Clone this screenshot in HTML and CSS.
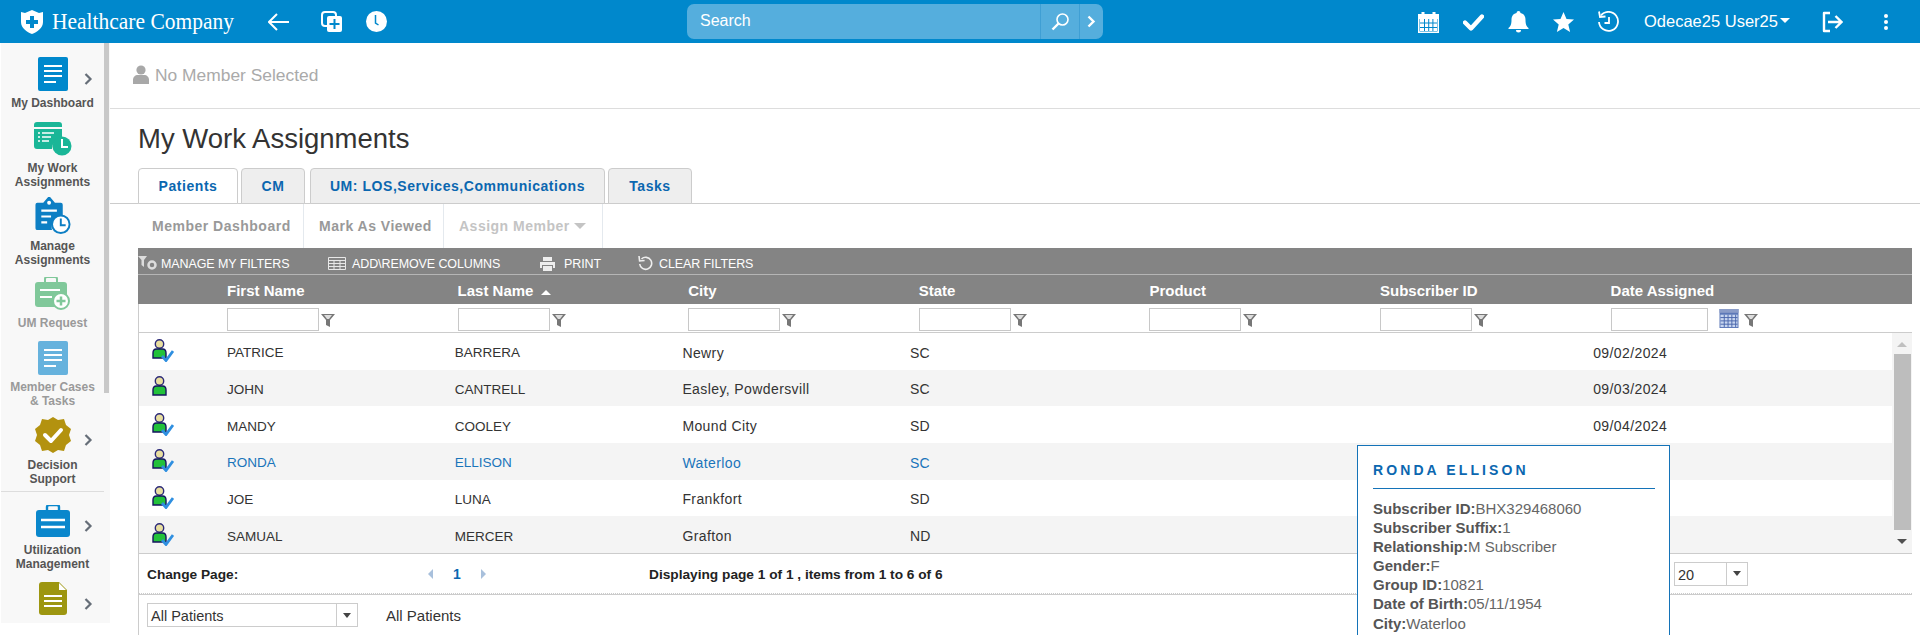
FILE: index.html
```html
<!DOCTYPE html>
<html lang="en">
<head>
    <meta charset="UTF-8">
    <title>My Work Assignments</title>
    <link rel="stylesheet" href="styles.css">
</head>
<body>
    <svg class="icon-defs" width="0" height="0">
        <symbol id="person" viewBox="0 0 15 20">
            <ellipse cx="7.5" cy="5" rx="4.200" ry="4.300" fill="#e9dfa0" stroke="#2c2a78" stroke-width="1.400"/>
            <path d="M1 19v-5c0-2.500 1.500-4 3.500-4h6c2 0 3.500 1.500 3.500 4v5z" fill="#22c13a" stroke="#14145e" stroke-width="1.400"/>
        </symbol>
        <symbol id="tick" viewBox="0 0 13 12">
            <path d="M1 6l4 4.500 7-9.500" fill="none" stroke="#2f8fe0" stroke-width="2.800"/>
        </symbol>
        <symbol id="funnel" viewBox="0 0 14 13">
            <path d="M0 0h14l-5 6v7l-4-2v-5z" fill="#777"/>
            <path d="M3 1h8l-3 4h-2z" fill="#ddd"/>
        </symbol>
        <symbol id="chev" viewBox="0 0 9 12">
            <path d="M1.500 1l5 5-5 5" fill="none" stroke="#666e78" stroke-width="2.200"/>
        </symbol>
    </svg>

    <header class="topbar">
        <div class="brand">
            <svg class="brand-shield" viewBox="0 0 22 24">
                <path d="M0 2l4 1 7-3 7 3 4-1v10c0 6-6 10-11 12C6 22 0 18 0 12z" fill="#fff"/>
                <path d="M9 6h4v4h4v4h-4v4H9v-4H5v-4h4z" fill="#0088cc"/>
            </svg>
            <span class="brand-name">Healthcare Company</span>
        </div>
        <div class="top-tools">
            <svg class="tool-back" viewBox="0 0 21 18"><path d="M9 1L1 9l8 8M1 9h20" fill="none" stroke="#fff" stroke-width="2"/></svg>
            <svg class="tool-dup" viewBox="0 0 21 21">
                <rect x="1" y="1" width="14" height="14" rx="3" fill="none" stroke="#fff" stroke-width="2"/>
                <rect x="6" y="5" width="15" height="16" rx="2" fill="#fff"/>
                <path d="M13.500 8v10M8.500 13h10" stroke="#0088cc" stroke-width="2"/>
            </svg>
            <svg class="tool-clock" viewBox="0 0 21 21">
                <circle cx="10.500" cy="10.500" r="10.500" fill="#fff"/>
                <path d="M9.500 4v8l3 2" fill="none" stroke="#0088cc" stroke-width="1.500"/>
            </svg>
        </div>
        <div class="search">
            <span class="search-text">Search</span>
            <span class="search-btn">
                <svg viewBox="0 0 19 19" width="19" height="19"><circle cx="11.500" cy="7.500" r="5.500" fill="none" stroke="#fff" stroke-width="1.600"/><path d="M7.500 11.500L1.500 17.500" stroke="#fff" stroke-width="2.400"/></svg>
            </span>
            <span class="search-more">
                <svg viewBox="0 0 9 13" width="9" height="13"><path d="M1.500 1.500l5 5-5 5" fill="none" stroke="#fff" stroke-width="2.400"/></svg>
            </span>
        </div>
        <div class="top-right">
            <svg class="top-icon" viewBox="0 0 21 22">
                <path d="M0 3h21v19H0z" fill="#fff"/>
                <path d="M5 1v4M16 1v4" stroke="#fff" stroke-width="3"/>
                <path d="M1.500 8h18v12.500h-18z" fill="#0088cc"/>
                <path d="M2 8h4v3.500H2zM7 8h3.200v3.500H7zM11.200 8h3.200v3.500h-3.200zM15.400 8H19v3.500h-3.600zM2 12.500h4V16H2zM7 12.500h3.200V16H7zM11.200 12.500h3.200V16h-3.200zM15.400 12.500H19V16h-3.600zM2 17h4v3H2zM7 17h3.200v3H7zM11.200 17h3.200v3h-3.200zM15.400 17H19v3h-3.600z" fill="#fff"/>
            </svg>
            <svg class="top-icon" viewBox="0 0 21 22"><path d="M2 11.500l6 6L19 5.500" fill="none" stroke="#fff" stroke-width="4.400" stroke-linecap="round" stroke-linejoin="round"/></svg>
            <svg class="top-icon" viewBox="0 0 21 22"><path d="M10.500 0a2 2 0 0 1 2 2c4 1 5 4 5 7 0 5 1.500 7 3 8v1H.5v-1c1.500-1 3-3 3-8 0-3 1-6 5-7a2 2 0 0 1 2-2zM8 19h5a2.500 2.500 0 0 1-5 0z" fill="#fff"/></svg>
            <svg class="top-icon" viewBox="0 0 21 22"><path d="M10.500 1l3 7 7.500.6-5.700 4.900 1.800 7.500-6.600-4-6.600 4 1.800-7.500L0 8.600 7.500 8z" fill="#fff"/></svg>
            <svg class="top-icon" viewBox="0 0 21 22">
                <path d="M3 4.500A9.500 9.500 0 1 1 1 11" fill="none" stroke="#fff" stroke-width="1.800"/>
                <path d="M1 0.500l1 5.500 5.500-.5" fill="none" stroke="#fff" stroke-width="1.800"/>
                <path d="M11 6v6H6.500" fill="none" stroke="#fff" stroke-width="1.800"/>
            </svg>
            <span class="user-name">Odecae25 User25</span>
            <span class="user-caret"></span>
            <svg class="top-icon top-logout" viewBox="0 0 21 22">
                <path d="M8 2H2v18h6" fill="none" stroke="#fff" stroke-width="2.400" stroke-linejoin="round"/>
                <path d="M6 11h13M13.500 5l6 6-6 6" fill="none" stroke="#fff" stroke-width="2.400"/>
            </svg>
            <span class="kebab"><i></i><i></i><i></i></span>
        </div>
    </header>

    <div class="page">
        <aside class="sidebar">
            <nav class="side-nav">
                <a class="side-item">
                    <span class="side-row">
                        <svg class="side-icon" width="30" height="34" viewBox="0 0 30 34"><rect width="30" height="34" rx="2" fill="#0088cc"/><path d="M6 9h18M6 14h18M6 19h18M6 25h12" stroke="#fff" stroke-width="2.200"/></svg>
                        <svg class="side-chev"><use href="#chev"/></svg>
                    </span>
                    <span class="side-label">My Dashboard</span>
                </a>
                <a class="side-item">
                    <span class="side-row">
                        <svg class="side-icon" width="38" height="34" viewBox="0 0 38 34"><path d="M0 3a3 3 0 0 1 3-3h22a3 3 0 0 1 3 3v2H0zM0 7h28v9a11 11 0 0 0-10 11H3a3 3 0 0 1-3-3z" fill="#1ab697"/><path d="M4 11h2M8 11h12M4 15h2M8 15h9M4 19h2M8 19h7" stroke="#fff" stroke-width="1.600"/><circle cx="28" cy="24" r="9.500" fill="#1ab697"/><path d="M28 17v8h6" fill="none" stroke="#fff" stroke-width="2"/></svg>
                    </span>
                    <span class="side-label">My Work<br>Assignments</span>
                </a>
                <a class="side-item">
                    <span class="side-row">
                        <svg class="side-icon" width="36" height="38" viewBox="0 0 36 39"><path d="M2 7h6l5-6h2l5 6h6a2 2 0 0 1 2 2v11a12 12 0 0 0-11 15H2a2 2 0 0 1-2-2V9a2 2 0 0 1 2-2z" fill="#0d7fc4"/><circle cx="14" cy="7" r="2" fill="#fff"/><path d="M6 15h16M6 21h10M6 27h6" stroke="#fff" stroke-width="2.200"/><circle cx="26" cy="29" r="9" fill="#fff" stroke="#0d7fc4" stroke-width="2"/><path d="M26 23v7h5" fill="none" stroke="#0d7fc4" stroke-width="2"/></svg>
                    </span>
                    <span class="side-label">Manage<br>Assignments</span>
                </a>
                <a class="side-item side-off side-req">
                    <span class="side-row">
                        <svg class="side-icon" width="35" height="33" viewBox="0 0 35 33"><path d="M10 5V2a2 2 0 0 1 2-2h8a2 2 0 0 1 2 2v3" fill="none" stroke="#80c89a" stroke-width="2"/><rect y="5" width="32" height="25" rx="3" fill="#80c89a"/><path d="M5 13h20M5 20h12" stroke="#fff" stroke-width="2"/><circle cx="26" cy="24" r="8" fill="#fff" stroke="#80c89a" stroke-width="2"/><path d="M26 19.500v9M21.500 24h9" stroke="#80c89a" stroke-width="2.500"/></svg>
                    </span>
                    <span class="side-label">UM Request</span>
                </a>
                <a class="side-item side-off">
                    <span class="side-row">
                        <svg class="side-icon" width="30" height="34" viewBox="0 0 30 34"><rect width="30" height="34" rx="2" fill="#66b2dd"/><path d="M6 9h18M6 14h18M6 19h18M6 25h12" stroke="#fff" stroke-width="2.200"/></svg>
                    </span>
                    <span class="side-label">Member Cases<br>&amp; Tasks</span>
                </a>
                <a class="side-item">
                    <span class="side-row">
                        <svg class="side-icon" width="36" height="36" viewBox="0 0 36 36"><path d="M18 0l5 3 6-1 2 6 5 4-2 6 2 6-5 4-2 6-6-1-5 3-5-3-6 1-2-6-5-4 2-6-2-6 5-4 2-6 6 1z" fill="#b3920f"/><path d="M10 18l6 6 10-11" fill="none" stroke="#fff" stroke-width="4" stroke-linecap="round" stroke-linejoin="round"/></svg>
                        <svg class="side-chev"><use href="#chev"/></svg>
                    </span>
                    <span class="side-label">Decision<br>Support</span>
                </a>
                <div class="side-rule"></div>
                <a class="side-item side-util">
                    <span class="side-row">
                        <svg class="side-icon" width="34" height="32" viewBox="0 0 34 32"><path d="M11 5V2a2 2 0 0 1 2-2h8a2 2 0 0 1 2 2v3" fill="none" stroke="#0a87cc" stroke-width="2.400"/><rect y="5" width="34" height="27" rx="3" fill="#0a87cc"/><path d="M5 15h24M5 22h24" stroke="#fff" stroke-width="2.400"/></svg>
                        <svg class="side-chev"><use href="#chev"/></svg>
                    </span>
                    <span class="side-label">Utilization<br>Management</span>
                </a>
                <a class="side-item">
                    <span class="side-row">
                        <svg class="side-icon" width="28" height="33" viewBox="0 0 28 33"><path d="M3 0h17l8 8v22a3 3 0 0 1-3 3H3a3 3 0 0 1-3-3V3a3 3 0 0 1 3-3z" fill="#9d9610"/><path d="M20 1v7h7" fill="#fff"/><path d="M5 14h18M5 19h18M5 24h18" stroke="#fff" stroke-width="2.200"/></svg>
                        <svg class="side-chev"><use href="#chev"/></svg>
                    </span>
                </a>
            </nav>
            <div class="side-scroll"><div class="side-thumb"></div></div>
        </aside>

        <main class="content">
            <div class="member-bar">
                <svg class="member-icon" viewBox="0 0 16 19"><circle cx="8" cy="5" r="4.600" fill="#a8a8a8"/><path d="M0 19v-4c0-3 2-5 5-5h6c3 0 5 2 5 5v4z" fill="#a8a8a8"/></svg>
                <span>No Member Selected</span>
            </div>

            <h1 class="page-title">My Work Assignments</h1>

            <div class="tabs">
                <a class="tab tab-on tab-patients">Patients</a>
                <a class="tab tab-cm">CM</a>
                <a class="tab tab-um">UM: LOS,Services,Communications</a>
                <a class="tab tab-tasks">Tasks</a>
            </div>

            <div class="actions">
                <a class="action action-dash">Member Dashboard</a>
                <a class="action action-view">Mark As Viewed</a>
                <a class="action action-assign">Assign Member <span class="action-caret"></span></a>
            </div>

            <section class="grid">
                <div class="grid-tools">
                    <span class="grid-tool tool-filters">
                        <svg class="gt-icon" width="20" height="15" viewBox="0 0 20 15"><path d="M0 0h9L6 4v7L3.500 9V4z" fill="#ddd"/><circle cx="14" cy="9" r="3.500" fill="none" stroke="#ddd" stroke-width="2.500"/></svg>
                        MANAGE MY FILTERS
                    </span>
                    <span class="grid-tool tool-cols">
                        <svg class="gt-icon" width="18" height="13" viewBox="0 0 18 13"><path d="M.5.5h17v12H.5zM.5 3.500h17M.5 6.500h17M.5 9.500h17M6 3.500v9M12 3.500v9" fill="none" stroke="#e8e8e8"/></svg>
                        ADD\REMOVE COLUMNS
                    </span>
                    <span class="grid-tool tool-print">
                        <svg class="gt-icon" width="15" height="14" viewBox="0 0 15 14"><path d="M3 0h9v4H3zM0 5h15v6h-2V8H2v3H0zM3 9h9v5H3z" fill="#eee"/></svg>
                        PRINT
                    </span>
                    <span class="grid-tool">
                        <svg class="gt-icon" width="15" height="15" viewBox="0 0 15 15"><path d="M3.500 3a6 6 0 1 1-1.800 5" fill="none" stroke="#eee" stroke-width="1.600"/><path d="M1 0l.6 5 5-.5" fill="none" stroke="#eee" stroke-width="1.600"/></svg>
                        CLEAR FILTERS
                    </span>
                </div>

                <div class="grid-head">
                    <span></span>
                    <span>First Name</span>
                    <span>Last Name <i class="sort-up"></i></span>
                    <span>City</span>
                    <span>State</span>
                    <span>Product</span>
                    <span>Subscriber ID</span>
                    <span>Date Assigned</span>
                </div>

                <div class="grid-filter">
                    <span></span>
                    <span class="filter-cell"><input class="filter-input"><svg class="filter-icon"><use href="#funnel"/></svg></span>
                    <span class="filter-cell"><input class="filter-input"><svg class="filter-icon"><use href="#funnel"/></svg></span>
                    <span class="filter-cell"><input class="filter-input"><svg class="filter-icon"><use href="#funnel"/></svg></span>
                    <span class="filter-cell"><input class="filter-input"><svg class="filter-icon"><use href="#funnel"/></svg></span>
                    <span class="filter-cell"><input class="filter-input"><svg class="filter-icon"><use href="#funnel"/></svg></span>
                    <span class="filter-cell"><input class="filter-input"><svg class="filter-icon"><use href="#funnel"/></svg></span>
                    <span class="filter-cell">
                        <input class="filter-input filter-date">
                        <svg class="filter-cal" viewBox="0 0 20 20">
                            <rect width="20" height="20" fill="#5c78b8"/>
                            <rect width="20" height="4" fill="#8a9cc8"/>
                            <path d="M1 6h18v13H1z" fill="#c8d6f0"/>
                            <path d="M1 9h18M1 12.500h18M1 16h18M5 6v13M9 6v13M13 6v13M17 6v13" stroke="#4a66ac"/>
                        </svg>
                        <svg class="filter-icon"><use href="#funnel"/></svg>
                    </span>
                </div>

                <div class="grid-body">
                    <div class="grid-rows">
                        <div class="row">
                            <span class="row-icon"><svg class="ico-person"><use href="#person"/></svg><svg class="ico-tick"><use href="#tick"/></svg></span>
                            <span>PATRICE</span><span>BARRERA</span><span>Newry</span><span>SC</span><span></span><span></span><span>09/02/2024</span>
                        </div>
                        <div class="row">
                            <span class="row-icon"><svg class="ico-person"><use href="#person"/></svg></span>
                            <span>JOHN</span><span>CANTRELL</span><span>Easley, Powdersvill</span><span>SC</span><span></span><span></span><span>09/03/2024</span>
                        </div>
                        <div class="row">
                            <span class="row-icon"><svg class="ico-person"><use href="#person"/></svg><svg class="ico-tick"><use href="#tick"/></svg></span>
                            <span>MANDY</span><span>COOLEY</span><span>Mound City</span><span>SD</span><span></span><span></span><span>09/04/2024</span>
                        </div>
                        <div class="row row-hover">
                            <span class="row-icon"><svg class="ico-person"><use href="#person"/></svg><svg class="ico-tick"><use href="#tick"/></svg></span>
                            <span>RONDA</span><span>ELLISON</span><span>Waterloo</span><span>SC</span><span></span><span></span><span></span>
                        </div>
                        <div class="row">
                            <span class="row-icon"><svg class="ico-person"><use href="#person"/></svg><svg class="ico-tick"><use href="#tick"/></svg></span>
                            <span>JOE</span><span>LUNA</span><span>Frankfort</span><span>SD</span><span></span><span></span><span></span>
                        </div>
                        <div class="row">
                            <span class="row-icon"><svg class="ico-person"><use href="#person"/></svg><svg class="ico-tick"><use href="#tick"/></svg></span>
                            <span>SAMUAL</span><span>MERCER</span><span>Grafton</span><span>ND</span><span></span><span></span><span></span>
                        </div>
                    </div>
                    <div class="grid-scroll">
                        <i class="scroll-up"></i>
                        <div class="scroll-thumb"></div>
                        <i class="scroll-down"></i>
                    </div>
                </div>

                <div class="pager">
                    <b class="pager-label">Change Page:</b>
                    <span class="pager-nav">
                        <i class="page-prev"></i>
                        <span class="page-num">1</span>
                        <i class="page-next"></i>
                    </span>
                    <b class="pager-info">Displaying page 1 of 1 , items from 1 to 6 of 6</b>
                    <span class="dropdown dropdown-size"><span class="dropdown-text">20</span><span class="dropdown-btn"></span></span>
                </div>

                <div class="grid-foot">
                    <span class="dropdown dropdown-view"><span class="dropdown-text">All Patients</span><span class="dropdown-btn"></span></span>
                    <span class="foot-text">All Patients</span>
                </div>

                <div class="member-pop">
                    <h3 class="pop-name">RONDA ELLISON</h3>
                    <div class="pop-line"><b>Subscriber ID:</b>BHX329468060</div>
                    <div class="pop-line"><b>Subscriber Suffix:</b>1</div>
                    <div class="pop-line"><b>Relationship:</b>M Subscriber</div>
                    <div class="pop-line"><b>Gender:</b>F</div>
                    <div class="pop-line"><b>Group ID:</b>10821</div>
                    <div class="pop-line"><b>Date of Birth:</b>05/11/1954</div>
                    <div class="pop-line"><b>City:</b>Waterloo</div>
                </div>
            </section>
        </main>
    </div>
</body>
</html>
```
FILE: styles.css
```css
body {
    margin: 0;
    height: 635px;
    overflow: hidden;
    background: #fff;
    color: #333;
    font-family: 'Liberation Sans', Arial, sans-serif;
    font-size: 13px;
}

.icon-defs {
    display: block;
}

/* top bar */
.topbar {
    height: 43px;
    background: #0088cc;
    display: flex;
    align-items: center;
    color: #fff;
}

.brand {
    display: flex;
    align-items: center;
    margin-left: 21px;
    width: 226px;
}

.brand-shield {
    flex: none;
    width: 22px;
    height: 24px;
    margin-right: 9px;
}

.brand-name {
    font-family: 'Liberation Serif', serif;
    font-size: 24px;
    white-space: nowrap;
    transform: scaleX(.895);
    transform-origin: left center;
}

.top-tools {
    display: flex;
    align-items: center;
    gap: 32px;
    margin-left: 21px;
    width: 419px;
}

.tool-back {
    width: 21px;
    height: 18px;
}

.tool-dup,
.tool-clock {
    width: 21px;
    height: 21px;
}

.tool-clock {
    margin-left: -8px;
}

.search {
    width: 416px;
    height: 35px;
    background: #55aedd;
    border-radius: 7px;
    display: flex;
    align-items: stretch;
    font-size: 16px;
}

.search-text {
    flex: 1;
    padding-left: 13px;
    line-height: 33px;
}

.search-btn,
.search-more {
    display: flex;
    align-items: center;
    justify-content: center;
    border-left: 1px solid #3f9fd4;
}

.search-btn {
    width: 38px;
}

.search-more {
    width: 23px;
}

.top-right {
    display: flex;
    align-items: center;
    margin-left: 315px;
}

.top-icon {
    width: 21px;
    height: 22px;
    margin-right: 24px;
}

.user-name {
    font-size: 16.500px;
    margin-left: 1px;
    white-space: nowrap;
}

.user-caret {
    width: 0;
    height: 0;
    border-left: 5px solid transparent;
    border-right: 5px solid transparent;
    border-top: 5px solid #fff;
    margin: 0 0 3px 2px;
}

.top-logout {
    margin-left: 32px;
    margin-right: 41px;
}

.kebab {
    display: flex;
    flex-direction: column;
    gap: 2px;
}

.kebab i {
    width: 4px;
    height: 4px;
    background: #fff;
    border-radius: 50%;
}

/* sidebar */
.page {
    display: flex;
    height: 592px;
}

.sidebar {
    width: 109px;
    height: 580px;
    flex: none;
    display: flex;
    background: #f8f8f8;
    margin-left: 1px;
}

.side-nav {
    width: 103px;
    padding-top: 14px;
    display: grid;
    grid-template-rows: 65px 74px 81px 64px 76px 74px 14px 77px 41px;
}

.side-item {
    display: block;
    text-align: center;
    color: #555;
    font-weight: bold;
    font-size: 12px;
    line-height: 13.500px;
}

.side-off {
    color: #9a9a9a;
}

.side-row {
    display: grid;
    grid-template-columns: 1fr 40px 1fr;
    align-items: center;
    margin-bottom: 6px;
}

.side-req .side-row,
.side-util .side-row {
    margin-bottom: 7px;
}

.side-icon {
    display: block;
    grid-column: 2;
    justify-self: center;
}

.side-chev {
    width: 9px;
    height: 12px;
    justify-self: start;
    margin: 10px 0 0 11px;
}

.side-label {
    display: block;
}

.side-rule {
    height: 1px;
    background: #ddd;
}

.side-scroll {
    width: 5px;
}

.side-thumb {
    height: 350px;
    background: #c8c8c8;
}

/* main */
.content {
    flex: 1;
    min-width: 0;
}

.member-bar {
    height: 66px;
    box-sizing: border-box;
    border-bottom: 1px solid #ddd;
    padding-left: 23px;
    display: flex;
    align-items: center;
    gap: 6px;
    font-size: 17.400px;
    color: #aaa;
}

.member-icon {
    width: 16px;
    height: 19px;
    margin-top: -3px;
}

.page-title {
    margin: 0 0 0 28px;
    height: 59px;
    line-height: 60px;
    font-size: 27.500px;
    font-weight: normal;
    color: #333;
}

.tabs {
    height: 35px;
    padding-left: 28px;
    border-bottom: 1px solid #ccc;
    display: flex;
    gap: 3px;
}

.tab {
    box-sizing: border-box;
    height: 36px;
    border: 1px solid #ccc;
    border-radius: 4px 4px 0 0;
    background: #eee;
    color: #0b67b0;
    font-weight: bold;
    font-size: 14px;
    letter-spacing: .55px;
    line-height: 34px;
    text-align: center;
}

.tab-on {
    background: #fff;
}

.tab-patients {
    width: 100px;
}

.tab-cm {
    width: 64px;
}

.tab-um {
    width: 295px;
    margin-left: 2px;
}

.tab-tasks {
    width: 84px;
}

.actions {
    height: 44px;
    padding-left: 28px;
    display: flex;
    font-weight: bold;
    font-size: 14px;
    letter-spacing: .5px;
    color: #999;
}

.action {
    box-sizing: border-box;
    border-right: 1px solid #e4e9ee;
    line-height: 44px;
    padding-left: 15px;
    white-space: nowrap;
}

.action-dash {
    width: 166px;
    padding-left: 14px;
}

.action-view {
    width: 140px;
}

.action-assign {
    width: 159px;
    color: #c4c4c4;
}

.action-caret {
    display: inline-block;
    border-left: 6px solid transparent;
    border-right: 6px solid transparent;
    border-top: 6px solid #c4c4c4;
    margin-bottom: 2px;
}

/* grid */
.grid {
    position: relative;
    margin-left: 28px;
    margin-right: 8px;
}

.grid-tools {
    height: 26px;
    background: #848484;
    border-bottom: 1px solid #b5b5b5;
    display: flex;
    align-items: center;
    color: #fff;
    font-size: 12.500px;
    letter-spacing: -.1px;
}

.grid-tool {
    display: flex;
    align-items: center;
    white-space: nowrap;
    padding-top: 5px;
}

.gt-icon {
    margin-right: 6px;
}

.tool-filters {
    width: 190px;
}

.tool-filters .gt-icon {
    margin-right: 3px;
}

.tool-cols {
    width: 212px;
}

.tool-print {
    width: 98px;
}

.tool-print .gt-icon {
    margin-right: 9px;
}

.grid-head,
.grid-filter {
    display: grid;
    grid-template-columns: 89px repeat(6, 230.6px) 1fr;
}

.grid-head {
    height: 29px;
    background: #848484;
    color: #fff;
    font-weight: bold;
    font-size: 15px;
    line-height: 32px;
}

.sort-up {
    display: inline-block;
    border-left: 5px solid transparent;
    border-right: 5px solid transparent;
    border-bottom: 5px solid #fff;
    margin: 0 0 1px 3px;
}

.grid-filter {
    height: 29px;
    box-sizing: border-box;
    border-bottom: 1px solid #ccc;
    border-left: 1px solid #ccc;
}

.filter-cell {
    display: flex;
    align-items: flex-start;
    padding-top: 4px;
    margin-left: -1px;
}

.filter-input {
    box-sizing: border-box;
    width: 92px;
    height: 23px;
    border: 1px solid #c8c8c8;
    margin: 0;
    padding: 0;
    background: #fff;
}

.filter-date {
    width: 97px;
}

.filter-icon {
    width: 14px;
    height: 13px;
    margin: 6px 0 0 2px;
}

.filter-cal {
    width: 20px;
    height: 19px;
    margin: 1px 3px 0 11px;
}

.grid-body {
    display: flex;
    height: 221px;
    box-sizing: border-box;
    border-left: 1px solid #ccc;
    border-bottom: 1px solid #ccc;
}

.grid-rows {
    flex: 1;
    display: grid;
    grid-auto-rows: 1fr;
}

.row {
    display: grid;
    grid-template-columns: 88px repeat(6, 227.7px) 1fr;
    align-items: center;
    color: #333;
    white-space: nowrap;
}

.row > span {
    padding-top: 3px;
}

.row > span:nth-child(2),
.row > span:nth-child(3) {
    font-size: 13.500px;
}

.row > span:nth-child(4),
.row > span:nth-child(8) {
    font-size: 14px;
    letter-spacing: .4px;
}

.row > span:nth-child(5) {
    font-size: 14px;
}

.row:nth-child(even) {
    background: #f4f4f4;
}

.row-hover {
    color: #1a75bb;
}

.row > .row-icon {
    display: flex;
    align-items: flex-end;
    padding: 0 0 0 13px;
    margin-top: -4px;
}

.ico-person {
    width: 15px;
    height: 20px;
}

.ico-tick {
    width: 13px;
    height: 12px;
    margin: 0 0 -3px -6px;
}

.grid-scroll {
    width: 20px;
    background: #f4f4f4;
    display: flex;
    flex-direction: column;
    align-items: center;
}

.scroll-up {
    border-left: 5px solid transparent;
    border-right: 5px solid transparent;
    border-bottom: 5px solid #c0c0c0;
    margin: 9px 0 7px;
}

.scroll-thumb {
    width: 17px;
    flex: 1;
    background: #bdbdbd;
}

.scroll-down {
    border-left: 5px solid transparent;
    border-right: 5px solid transparent;
    border-top: 5px solid #505050;
    margin: 9px 0;
}

.pager {
    height: 39px;
    border-left: 1px solid #ccc;
    border-bottom: 1px dotted #ccc;
    display: flex;
    align-items: center;
    font-size: 13.700px;
    color: #222;
}

.pager-label {
    width: 281px;
    padding: 1px 0 0 8px;
    box-sizing: border-box;
}

.pager-nav {
    width: 229px;
    display: flex;
    align-items: center;
    gap: 20px;
    padding-left: 8px;
    box-sizing: border-box;
}

.page-prev {
    border-top: 5px solid transparent;
    border-bottom: 5px solid transparent;
    border-right: 5px solid #a8c0dc;
}

.page-next {
    border-top: 5px solid transparent;
    border-bottom: 5px solid transparent;
    border-left: 5px solid #a8c0dc;
}

.page-num {
    color: #0b67b0;
    font-weight: bold;
    font-size: 14px;
}

.pager-info {
    width: 1025px;
    padding-top: 1px;
    white-space: nowrap;
}

.dropdown {
    box-sizing: border-box;
    display: flex;
    height: 24px;
    border: 1px solid #ccc;
    background: #fff;
    font-size: 14.500px;
    color: #333;
}

.dropdown-text {
    flex: 1;
    padding-left: 3px;
    line-height: 24px;
}

.dropdown-btn {
    width: 20px;
    border-left: 1px solid #ccc;
    display: flex;
    align-items: center;
    justify-content: center;
}

.dropdown-btn::after {
    content: "";
    border-left: 4px solid transparent;
    border-right: 4px solid transparent;
    border-top: 5px solid #444;
}

.dropdown-size {
    width: 74px;
}

.grid-foot {
    height: 60px;
    border-left: 1px solid #ccc;
    border-top: 1px solid #ccc;
    display: flex;
    align-items: flex-start;
    padding-top: 8px;
    box-sizing: border-box;
}

.dropdown-view {
    width: 211px;
    margin-left: 8px;
}

.foot-text {
    margin-left: 28px;
    font-size: 15px;
    line-height: 25px;
}

/* hover card */
.member-pop {
    position: absolute;
    left: 1219px;
    top: 197px;
    width: 313px;
    box-sizing: border-box;
    background: #fff;
    border: 1px solid #1473b8;
    padding: 15px 14px 20px 15px;
    color: #666;
    font-size: 15px;
    line-height: 19.100px;
}

.pop-name {
    margin: 0 0 10px;
    padding-bottom: 8px;
    border-bottom: 1px solid #1473b8;
    color: #0b67b0;
    font-size: 14px;
    line-height: 19px;
    font-weight: bold;
    letter-spacing: 3.100px;
}

.pop-line b {
    color: #555;
}
```
